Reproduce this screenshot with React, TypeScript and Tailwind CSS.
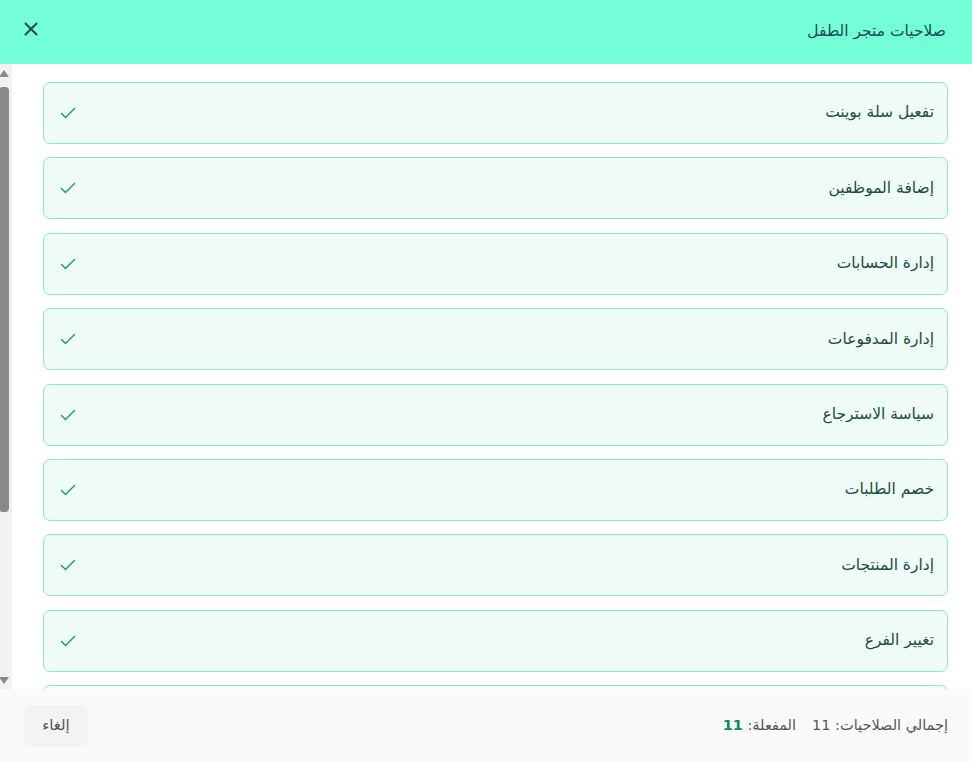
import React from 'react';

const permissions = [
  'تفعيل سلة بوينت',
  'إضافة الموظفين',
  'إدارة الحسابات',
  'إدارة المدفوعات',
  'سياسة الاسترجاع',
  'خصم الطلبات',
  'إدارة المنتجات',
  'تغيير الفرع',
  'إدارة العملاء',
  'إدارة التقارير',
  'إدارة المخزون',
];

function CheckIcon() {
  return (
    <svg width="16" height="16" viewBox="0 0 16 16" fill="none" stroke="#1a9a6a" strokeWidth="1.4" strokeLinecap="round" strokeLinejoin="round">
      <path d="M1.5 8.5l4 4L14.5 3.5" />
    </svg>
  );
}

function CloseIcon() {
  return (
    <svg width="14" height="14" viewBox="0 0 14 14" fill="none" stroke="#1d4a52" strokeWidth="2" strokeLinecap="round">
      <path d="M1.5 1.5l11 11M12.5 1.5l-11 11" />
    </svg>
  );
}

function FakeScrollbar() {
  return (
    <div dir="ltr" className="w-3 shrink-0 bg-[#f1f1f1] flex flex-col items-start pt-[6px] pb-[5px]">
      <div className="w-0 h-0 border-l-[5px] border-r-[5px] border-b-[7px] border-l-transparent border-r-transparent border-b-[#8a8a8a] -ml-[1px]" />
      <div className="mt-[10px] h-[425px] w-[9px] rounded-r-[4px] rounded-l-[2px] bg-[#8a8a8a]" />
      <div className="flex-1" />
      <div className="w-0 h-0 border-l-[5px] border-r-[5px] border-t-[7px] border-l-transparent border-r-transparent border-t-[#8a8a8a] -ml-[1px]" />
    </div>
  );
}

export default function App() {
  return (
    <div dir="rtl" className="h-screen flex flex-col bg-white font-['DejaVu_Sans',sans-serif] overflow-hidden">
      <header className="h-16 shrink-0 bg-[#74fed8] flex items-center justify-between pr-[26px] pl-6">
        <h2 className="text-[15.5px] text-[#1d4a52]">صلاحيات متجر الطفل</h2>
        <button className="w-[14px] h-[14px] flex items-center justify-center -mt-[6px]">
          <CloseIcon />
        </button>
      </header>

      <div className="flex-1 min-h-0 flex">
        <div className="flex-1 overflow-hidden pt-[18px] pr-6 pl-[31px] flex flex-col gap-[13.4px]">
          {permissions.map((p) => (
            <div
              key={p}
              className="h-[62px] shrink-0 rounded-[7px] border border-[#8ee6c4] bg-[#effbf6] flex items-center justify-between pr-[13px] pl-4"
            >
              <span className="text-[15.5px] text-[#1b4d3e]">{p}</span>
              <CheckIcon />
            </div>
          ))}
        </div>
        <FakeScrollbar />
      </div>

      <footer className="h-[73px] shrink-0 bg-[#fafafa] flex items-center justify-between pr-6 pl-6">
        <div className="flex items-center gap-4 text-[14.5px] text-[#555]">
          <span>إجمالي الصلاحيات: 11</span>
          <span>
            المفعلة: <span className="font-bold text-[#0e8a5f]">11</span>
          </span>
        </div>
        <button className="h-[42px] w-16 rounded-[6px] bg-[#f3f3f3] text-[15px] text-[#555]">إلغاء</button>
      </footer>
    </div>
  );
}
